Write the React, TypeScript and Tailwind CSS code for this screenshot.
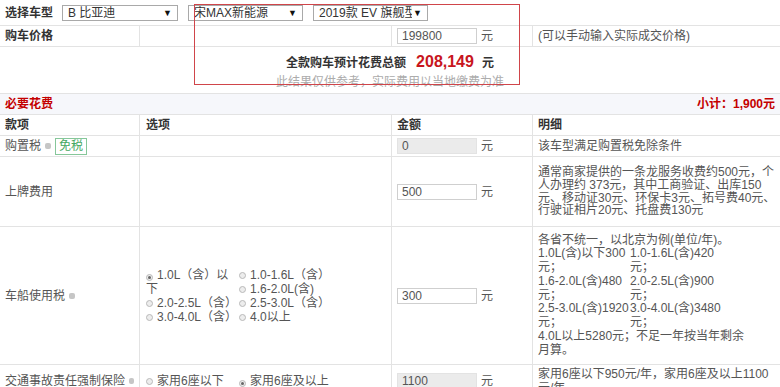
import React from 'react';

const line = 'border-[#e3e3e3]';
const cols = 'grid grid-cols-[140px_252px_141px_1fr]';
const cell = 'flex items-center px-[5px] border-r border-[#e3e3e3]';
const cellLast = 'flex items-center px-[5px]';

function Help() {
  return <span className="inline-block w-[6px] h-[6px] rounded-[2px] bg-[#c6c6c6] ml-[4px] align-middle" />;
}

function Radio({ checked }: { checked?: boolean }) {
  return (
    <span className="inline-flex items-center justify-center w-[7px] h-[7px] rounded-full border border-[#b9b9b9] bg-[#ededed] mr-[4px] align-[0px]">
      {checked && <span className="w-[3px] h-[3px] rounded-full bg-[#666]" />}
    </span>
  );
}

function Select({ width, text }: { width: string; text: string }) {
  return (
    <div className={`${width} flex items-center h-[16px] border border-[#a9a9a9] bg-white overflow-hidden`}>
      <span className="flex-1 overflow-hidden whitespace-nowrap pl-[5px] leading-[14px] text-[#333]">{text}</span>
      <span className="text-[9px] leading-[14px] text-[#111] pr-[5px] pl-[1px] bg-white">▼</span>
    </div>
  );
}

function Amount({ value, disabled }: { value: string; disabled?: boolean }) {
  return (
    <div className="flex items-center">
      <div
        className={`w-[80px] h-[16px] border border-[#cfcfcf] px-[4px] leading-[14px] text-[#555] ${
          disabled ? 'bg-[#ebebeb] border-[#e3e3e3]' : 'bg-white'
        }`}
      >
        {value}
      </div>
      <span className="ml-[4px] text-[#555]">元</span>
    </div>
  );
}

function Opt({ label, checked, span }: { label: React.ReactNode; checked?: boolean; span?: boolean }) {
  return (
    <div className={`whitespace-nowrap ${span ? 'row-span-2' : ''}`}>
      <Radio checked={checked} />
      {label}
    </div>
  );
}

const taxNotes: [string, string][] = [
  ['1.0L(含)以下300', '元；'],
  ['1.0-1.6L(含)420', '元；'],
  ['1.6-2.0L(含)480', '元；'],
  ['2.0-2.5L(含)900', '元；'],
  ['2.5-3.0L(含)1920', '元；'],
  ['3.0-4.0L(含)3480', '元；'],
];

export default function App() {
  return (
    <div className="relative w-[780px] h-[387px] overflow-hidden bg-white text-[12px] text-[#555] font-['Liberation_Sans','Noto_Sans_CJK_SC',sans-serif]">
      {/* 选择车型 */}
      <div className={`flex items-center h-[26px] border-b ${line} pl-[5px]`}>
        <span className="font-bold text-[#333]">选择车型</span>
        <div className="ml-[9px]">
          <Select width="w-[116px]" text="B 比亚迪" />
        </div>
        <div className="ml-[10px]">
          <Select width="w-[115px]" text="宋MAX新能源" />
        </div>
        <div className="ml-[10px]">
          <Select width="w-[115px]" text="2019款 EV 旗舰型" />
        </div>
      </div>

      {/* 购车价格 */}
      <div className={`${cols} h-[21px] border-b ${line}`}>
        <div className={`${cell} font-bold text-[#333]`}>购车价格</div>
        <div className={cell} />
        <div className={cell}>
          <Amount value="199800" />
        </div>
        <div className={cellLast}>(可以手动输入实际成交价格)</div>
      </div>

      {/* 总额 */}
      <div className={`flex flex-col items-center h-[47px] pt-[6px] border-b ${line}`}>
        <div className="flex items-baseline leading-[18px] font-bold text-[#333]">
          <span>全款购车预计花费总额</span>
          <span className="ml-[10px] text-[16px] text-[#c8161d]">208,149</span>
          <span className="ml-[8px]">元</span>
        </div>
        <div className="leading-[16px] mt-[2px] text-[#acacac]">此结果仅供参考，实际费用以当地缴费为准</div>
      </div>

      {/* 必要花费 */}
      <div className={`flex items-center justify-between h-[21px] px-[5px] bg-[#f6f7fb] border-b ${line} font-bold text-[#c40000]`}>
        <span>必要花费</span>
        <span>小计：1,900元</span>
      </div>

      {/* 表头 */}
      <div className={`${cols} h-[21px] border-b ${line} text-[#333] font-bold`}>
        <div className={cell}>款项</div>
        <div className={`${cell} pl-[6px]`}>选项</div>
        <div className={cell}>金额</div>
        <div className={cellLast}>明细</div>
      </div>

      {/* 购置税 */}
      <div className={`${cols} h-[21px] border-b ${line}`}>
        <div className={cell}>
          购置税
          <Help />
          <span className="ml-[4px] px-[3px] leading-[15px] border border-[#86c79a] text-[#45a862]">免税</span>
        </div>
        <div className={cell} />
        <div className={cell}>
          <Amount value="0" disabled />
        </div>
        <div className={cellLast}>该车型满足购置税免除条件</div>
      </div>

      {/* 上牌费用 */}
      <div className={`${cols} h-[70px] border-b ${line}`}>
        <div className={cell}>上牌费用</div>
        <div className={cell} />
        <div className={cell}>
          <Amount value="500" />
        </div>
        <div className={`${cellLast} leading-[12.6px] whitespace-nowrap`}>
          <div>
            <div>通常商家提供的一条龙服务收费约500元，个</div>
            <div>人办理约 373元，其中工商验证、出库150</div>
            <div>元、移动证30元、环保卡3元、拓号费40元、</div>
            <div>行驶证相片20元、托盘费130元</div>
          </div>
        </div>
      </div>

      {/* 车船使用税 */}
      <div className={`${cols} h-[138px] border-b ${line}`}>
        <div className={cell}>
          车船使用税
          <Help />
        </div>
        <div className={`${cell} pl-[6px]`}>
          <div className="grid grid-cols-[93px_93px] leading-[14px]">
            <Opt
              span
              checked
              label={
                <>
                  1.0L（含）以<br />下
                </>
              }
            />
            <Opt label="1.0-1.6L（含）" />
            <Opt label="1.6-2.0L(含)" />
            <Opt label="2.0-2.5L（含）" />
            <Opt label="2.5-3.0L（含）" />
            <Opt label="3.0-4.0L（含）" />
            <Opt label="4.0以上" />
          </div>
        </div>
        <div className={cell}>
          <Amount value="300" />
        </div>
        <div className={`${cellLast} leading-[13.75px] whitespace-nowrap`}>
          <div>
            <div>各省不统一，以北京为例(单位/年)。</div>
            <div className="grid grid-cols-[92px_92px]">
              {taxNotes.map(([a, b]) => (
                <div key={a}>
                  {a}
                  <br />
                  {b}
                </div>
              ))}
            </div>
            <div>4.0L以上5280元；不足一年按当年剩余</div>
            <div>月算。</div>
          </div>
        </div>
      </div>

      {/* 交强险 */}
      <div className={`${cols} h-[32px] border-b ${line}`}>
        <div className={`${cell} whitespace-nowrap`}>
          交通事故责任强制保险
          <Help />
        </div>
        <div className={`${cell} pl-[6px]`}>
          <div className="grid grid-cols-[93px_93px] leading-[14px]">
            <Opt label="家用6座以下" />
            <Opt checked label="家用6座及以上" />
          </div>
        </div>
        <div className={cell}>
          <Amount value="1100" disabled />
        </div>
        <div className={`${cellLast} leading-[14px] whitespace-nowrap`}>
          <div>
            <div>家用6座以下950元/年，家用6座及以上1100</div>
            <div>元/年</div>
          </div>
        </div>
      </div>

      {/* 标注框 */}
      <div className="absolute left-[194px] top-[4px] w-[326px] h-[81px] border border-[#d0454a] pointer-events-none" />
    </div>
  );
}
